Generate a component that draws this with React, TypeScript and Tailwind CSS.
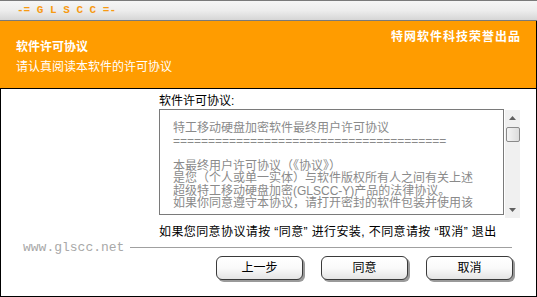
import React from "react";

const font = { fontFamily: '"Liberation Sans", "Noto Sans CJK SC", sans-serif' };

function Btn({ label }: { label: string }) {
  return (
    <div className="relative w-[89px] h-[26px]">
      <div className="absolute left-[2px] top-[2px] w-[87px] h-[24px] rounded-[6px] bg-[#9a9a9a]" />
      <div className="absolute left-0 top-0 w-[87px] h-[24px] rounded-[6px] border border-[#3a3a3a] bg-gradient-to-b from-white via-[#fafafa] to-[#e4e4e4] flex items-center justify-center text-[12px] leading-[12px] text-black">
        {label}
      </div>
    </div>
  );
}

export default function App() {
  return (
    <div className="w-[537px] h-[297px] bg-white overflow-hidden flex flex-col" style={font}>
      {/* top bar */}
      <div className="h-[21px] border-t border-b border-[#7a7a7a] bg-gradient-to-b from-[#f6f6f6] via-[#ededed] to-[#d6d6d6] flex items-center pl-[17px]">
        <span
          className="text-[11px] leading-[11px] font-bold text-[#f79a12] whitespace-pre"
          style={{ fontFamily: '"Liberation Mono", monospace' }}
        >
          -= G L S C C =-
        </span>
      </div>
      {/* orange header */}
      <div className="h-[68px] bg-[#ff9c00] border-b border-r border-black flex justify-between pl-[16px] pr-[15px]">
        <div className="pt-[20px] text-white">
          <div className="text-[12px] leading-[12px] font-bold">软件许可协议</div>
          <div className="text-[12px] leading-[12px] mt-[8px]">请认真阅读本软件的许可协议</div>
        </div>
        <div className="pt-[10px] text-white text-[12px] leading-[12px] font-bold tracking-[1px]">特网软件科技荣誉出品</div>
      </div>
      {/* body */}
      <div className="flex-1 border-l border-r border-b border-black flex flex-col">
        <div className="pl-[158px] pt-[6px] flex flex-col">
          <div className="text-[12px] leading-[12px] text-black">软件许可协议:</div>
          <div className="flex mt-[2px]">
            <div className="w-[345px] h-[106px] border border-[#7a7a7a] pl-[13px] pt-[12px] text-[12px] leading-[12.5px] text-[#8a8a8a] overflow-hidden whitespace-nowrap">
              <div>特工移动硬盘加密软件最终用户许可协议</div>
              <div>{"=".repeat(39)}</div>
              <div>&nbsp;</div>
              <div>本最终用户许可协议（《协议》）</div>
              <div>是您（个人或单一实体）与软件版权所有人之间有关上述</div>
              <div>超级特工移动硬盘加密(GLSCC-Y)产品的法律协议。</div>
              <div>如果你同意遵守本协议，请打开密封的软件包装并使用该</div>
            </div>
            <div className="ml-[1px] mt-[1px] w-[15px] h-[108px] bg-[#f0f0f0] flex flex-col items-center">
              <svg width="7" height="4" viewBox="0 0 7 4" className="mt-[6px]">
                <path d="M3.5 0 L7 4 L0 4 Z" fill="#606060" />
              </svg>
              <div className="mt-[7px] w-[14px] h-[15px] rounded-[2px] border border-[#8a8a8a] bg-gradient-to-r from-[#f4f4f4] to-[#dcdcdc]" />
              <div className="flex-1" />
              <svg width="7" height="4" viewBox="0 0 7 4" className="mb-[6px]">
                <path d="M0 0 L7 0 L3.5 4 Z" fill="#606060" />
              </svg>
            </div>
          </div>
          <div className="mt-[8px] text-[12px] leading-[12px] text-black whitespace-pre tracking-[0.4px]">
            如果您同意协议请按 “同意” 进行安装, 不同意请按 “取消” 退出
          </div>
        </div>
        <div className="flex items-center mt-[3px] pl-[22px] pr-[24px]">
          <span
            className="text-[13px] leading-[13px] text-[#a8a8a8]"
            style={{ fontFamily: '"Liberation Mono", monospace' }}
          >
            www.glscc.net
          </span>
          <div className="flex-1 h-px bg-[#a0a0a0] ml-[6px]" />
        </div>
        <div className="flex pl-[215px] gap-[16px] mt-[2px]">
          <Btn label="上一步" />
          <Btn label="同意" />
          <Btn label="取消" />
        </div>
      </div>
    </div>
  );
}
